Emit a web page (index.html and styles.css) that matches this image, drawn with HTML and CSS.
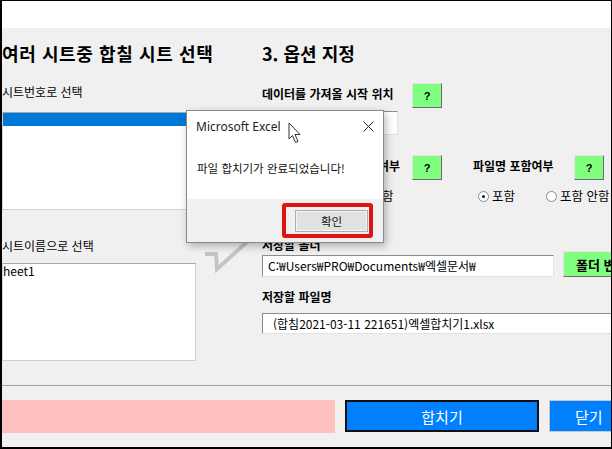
FILE: index.html
```html
<!DOCTYPE html>
<html lang="ko">
<head>
    <meta charset="UTF-8">
    <meta name="viewport" content="width=device-width, initial-scale=1.0">
    <title>엑셀 합치기</title>
    <link rel="stylesheet" href="styles.css">
</head>
<body>
    <div class="window">
        <div class="topbar"></div>
        <div class="form">
            <div class="main">
                <div class="col-left">
                    <div class="section-title wide">여러 시트중 합칠 시트 선택</div>
                    <div class="label first">시트번호로 선택</div>
                    <div class="listbox one">
                        <div class="list-item selected">&nbsp;</div>
                    </div>
                    <div class="label second">시트이름으로 선택</div>
                    <div class="listbox two">
                        <div class="list-item">heet1</div>
                    </div>
                </div>
                <div class="col-right">
                    <div class="section-title">3. 옵션 지정</div>
                    <div class="opt-row start-row">
                        <span class="opt-label">데이터를 가져올 시작 위치</span>
                        <button class="help-btn">?</button>
                    </div>
                    <div class="textbox start-box"></div>
                    <div class="opt-grid">
                        <div class="opt-row end">
                            <span class="opt-label">시트명 포함여부</span>
                            <button class="help-btn">?</button>
                        </div>
                        <div class="opt-row narrow">
                            <span class="opt-label">파일명 포함여부</span>
                            <button class="help-btn">?</button>
                        </div>
                        <div class="radio-group flush">
                            <span class="radio checked"></span><span class="radio-text">포함</span>
                            <span class="radio"></span><span class="radio-text">포함 안함</span>
                        </div>
                        <div class="radio-group">
                            <span class="radio checked"></span><span class="radio-text">포함</span>
                            <span class="radio"></span><span class="radio-text">포함 안함</span>
                        </div>
                    </div>
                    <div class="opt-label folder-label">저장할 폴더</div>
                    <div class="folder-row">
                        <div class="textbox folder-box">C:₩Users₩PRO₩Documents₩엑셀문서₩</div>
                        <button class="folder-btn">폴더 변경</button>
                    </div>
                    <div class="opt-label file-label">저장할 파일명</div>
                    <div class="textbox file-box">(합침2021-03-11 221651)엑셀합치기1.xlsx</div>
                </div>
            </div>
            <div class="divider"></div>
            <div class="actions">
                <div class="status-bar"></div>
                <button class="action-btn merge">합치기</button>
                <button class="action-btn close">닫기</button>
            </div>
        </div>

        <!-- 꼬리 모양 (말풍선) -->
        <svg class="callout-tail" width="50" height="36" viewBox="0 0 50 36">
            <polyline points="1,15 12,15 13,30 44,2" fill="none" stroke="#c4c4c4" stroke-width="4"/>
        </svg>

        <!-- 메시지 박스 -->
        <div class="msgbox">
            <div class="msgbox-head">
                <span class="msgbox-title">Microsoft Excel</span>
                <svg class="msgbox-x" width="11" height="11" viewBox="0 0 11 11">
                    <path d="M0.5 0.5 L10.5 10.5 M10.5 0.5 L0.5 10.5" stroke="#222" stroke-width="1"/>
                </svg>
            </div>
            <div class="msgbox-body">파일 합치기가 완료되었습니다!</div>
            <div class="msgbox-foot">
                <button class="ok-btn">확인</button>
            </div>
            <div class="highlight"></div>
        </div>

        <svg class="cursor" width="14" height="22" viewBox="0 0 14 22">
            <path d="M1 1 L1 17 L4.5 13.5 L7.5 20.5 L10 19.5 L7 12.5 L12 12.5 Z" fill="#fff" stroke="#333" stroke-width="1" stroke-linejoin="round"/>
        </svg>
    </div>
</body>
</html>
```

FILE: styles.css
```css
* {
    box-sizing: border-box;
}
body {
    margin: 0;
    font-family: 'Noto Sans CJK KR', 'Noto Sans', sans-serif;
    color: #000;
    background: #fff;
}
.window {
    position: relative;
    width: 612px;
    height: 449px;
    border-top: 1px solid #000;
    border-left: 2px solid #000;
    border-bottom: 2px solid #000;
    border-right: 1px solid #000;
    display: flex;
    flex-direction: column;
    overflow: hidden;
}
.topbar {
    height: 27px;
    background: #fff;
}
.form {
    flex: 1;
    background: #f0f0f0;
    display: flex;
    flex-direction: column;
}
.main {
    display: flex;
    padding-top: 13px;
}
.col-left {
    width: 194px;
    display: flex;
    flex-direction: column;
}
.col-right {
    margin-left: 66px;
    flex: 1;
    display: flex;
    flex-direction: column;
}
.section-title {
    font-size: 18px;
    font-weight: bold;
    line-height: 24px;
    white-space: nowrap;
}
.section-title.wide {
    letter-spacing: 0.6px;
}
.label {
    font-size: 12px;
    line-height: 16px;
    white-space: nowrap;
}
.label.first {
    margin-top: 19px;
}
.label.second {
    margin-top: 28px;
}
.listbox {
    background: #fff;
    border: 1px solid #d0d0d0;
    border-top-color: #a8a8a8;
    height: 98px;
}
.listbox.one {
    margin-top: 12px;
}
.listbox.two {
    margin-top: 9px;
}
.list-item {
    font-size: 12px;
    line-height: 13px;
    height: 13px;
    white-space: nowrap;
}
.list-item.selected {
    background: #0078d7;
}

/* 옵션 */
.opt-row {
    display: flex;
    align-items: center;
    justify-content: space-between;
    width: 180px;
    height: 25px;
}
.opt-row.end {
    justify-content: flex-end;
    gap: 12px;
}
.opt-row.narrow {
    width: 131px;
}
.start-row {
    margin-top: 18px;
}
.opt-label {
    font-size: 12px;
    font-weight: bold;
    line-height: 16px;
    padding-bottom: 4px;
    white-space: nowrap;
}
.help-btn {
    width: 30px;
    height: 25px;
    padding: 0;
    background: #80ff80;
    border: 1px solid;
    border-color: #e4e4e4 #6c6c6c #6c6c6c #e4e4e4;
    font-family: 'Liberation Sans', sans-serif;
    font-size: 11px;
    font-weight: bold;
}
.textbox {
    background: #fff;
    border: 1px solid;
    border-color: #8c8c8c #e3e3e3 #e3e3e3 #8c8c8c;
    font-size: 12px;
    white-space: nowrap;
}
.start-box {
    width: 136px;
    height: 24px;
    margin-top: 3px;
}
.opt-grid {
    display: grid;
    grid-template-columns: 211px auto;
    margin-top: 20px;
}
.radio-group {
    display: flex;
    align-items: center;
    margin-top: 8px;
    padding-left: 5px;
    height: 16px;
}
.radio-group.flush {
    padding-left: 0;
}
.radio {
    width: 11px;
    height: 11px;
    border-radius: 50%;
    border: 1px solid #8a8a8a;
    background: #fff;
    position: relative;
}
.radio.checked::after {
    content: '';
    position: absolute;
    left: 3px;
    top: 3px;
    width: 3px;
    height: 3px;
    border-radius: 50%;
    background: #111;
}
.radio-text {
    font-size: 12.5px;
    line-height: 16px;
    margin-left: 3px;
    margin-right: 31px;
    white-space: nowrap;
}
.folder-label {
    margin-top: 34px;
    line-height: 13px;
    padding-bottom: 0;
}
.folder-row {
    display: flex;
    align-items: flex-end;
    gap: 9px;
}
.folder-box {
    width: 292px;
    height: 22px;
    line-height: 20px;
    padding-left: 5px;
}
.folder-btn {
    width: 70px;
    height: 26px;
    padding: 0 0 0 12px;
    text-align: left;
    background: #80ff80;
    border: 1px solid;
    border-color: #e4e4e4 #6c6c6c #6c6c6c #e4e4e4;
    font-family: 'Noto Sans CJK KR', sans-serif;
    font-size: 13px;
    font-weight: bold;
}
.file-label {
    margin-top: 12px;
}
.file-box {
    width: 360px;
    height: 21px;
    line-height: 19px;
    padding-left: 10px;
    margin-top: 4px;
}

/* 하단 */
.divider {
    margin-top: 24px;
    height: 1px;
    background: #a0a0a0;
}
.actions {
    display: flex;
    gap: 10px;
    margin-top: 14px;
    height: 33px;
}
.status-bar {
    width: 333px;
    flex-shrink: 0;
    background: #ffc0c0;
}
.action-btn {
    flex-shrink: 0;
    height: 32px;
    background: #0080ff;
    color: #fff;
    font-family: 'Noto Sans CJK KR', sans-serif;
    font-size: 15px;
}
.action-btn.merge {
    width: 194px;
    border: 2px solid #111;
}
.action-btn.close {
    width: 100px;
    border: 1px solid #c8c8c8;
    text-align: left;
    padding-left: 25px;
}

/* 말풍선 꼬리 */
.callout-tail {
    position: absolute;
    left: 202px;
    top: 238px;
}

/* 메시지 박스 */
.msgbox {
    position: absolute;
    left: 184px;
    top: 109px;
    width: 198px;
    height: 133px;
    background: #fff;
    border: 1px solid #8a8a8a;
    box-shadow: 2px 3px 8px rgba(0, 0, 0, 0.28);
    display: flex;
    flex-direction: column;
}
.msgbox-head {
    display: flex;
    align-items: center;
    justify-content: space-between;
    height: 31px;
    padding: 0 9px 0 9px;
}
.msgbox-title {
    font-family: 'Noto Sans', sans-serif;
    font-size: 12px;
    color: #222;
}
.msgbox-body {
    flex: 1;
    padding: 18px 0 0 10px;
    font-size: 11.5px;
    line-height: 16px;
    color: #111;
    white-space: nowrap;
}
.msgbox-foot {
    height: 43px;
    background: #f0f0f0;
    display: flex;
    justify-content: flex-end;
    padding: 11px 15px 0 0;
}
.ok-btn {
    width: 73px;
    height: 22px;
    padding: 0;
    background: #e1e1e1;
    border: 1px solid #adadad;
    box-shadow: inset 0 0 0 1px #f4f4f4;
    font-family: 'Noto Sans CJK KR', sans-serif;
    font-size: 11.5px;
    color: #111;
}
.highlight {
    position: absolute;
    left: 95px;
    top: 92px;
    width: 91px;
    height: 35px;
    border: 4px solid #e01414;
    border-radius: 3px;
}
.cursor {
    position: absolute;
    left: 286px;
    top: 121px;
}
```
